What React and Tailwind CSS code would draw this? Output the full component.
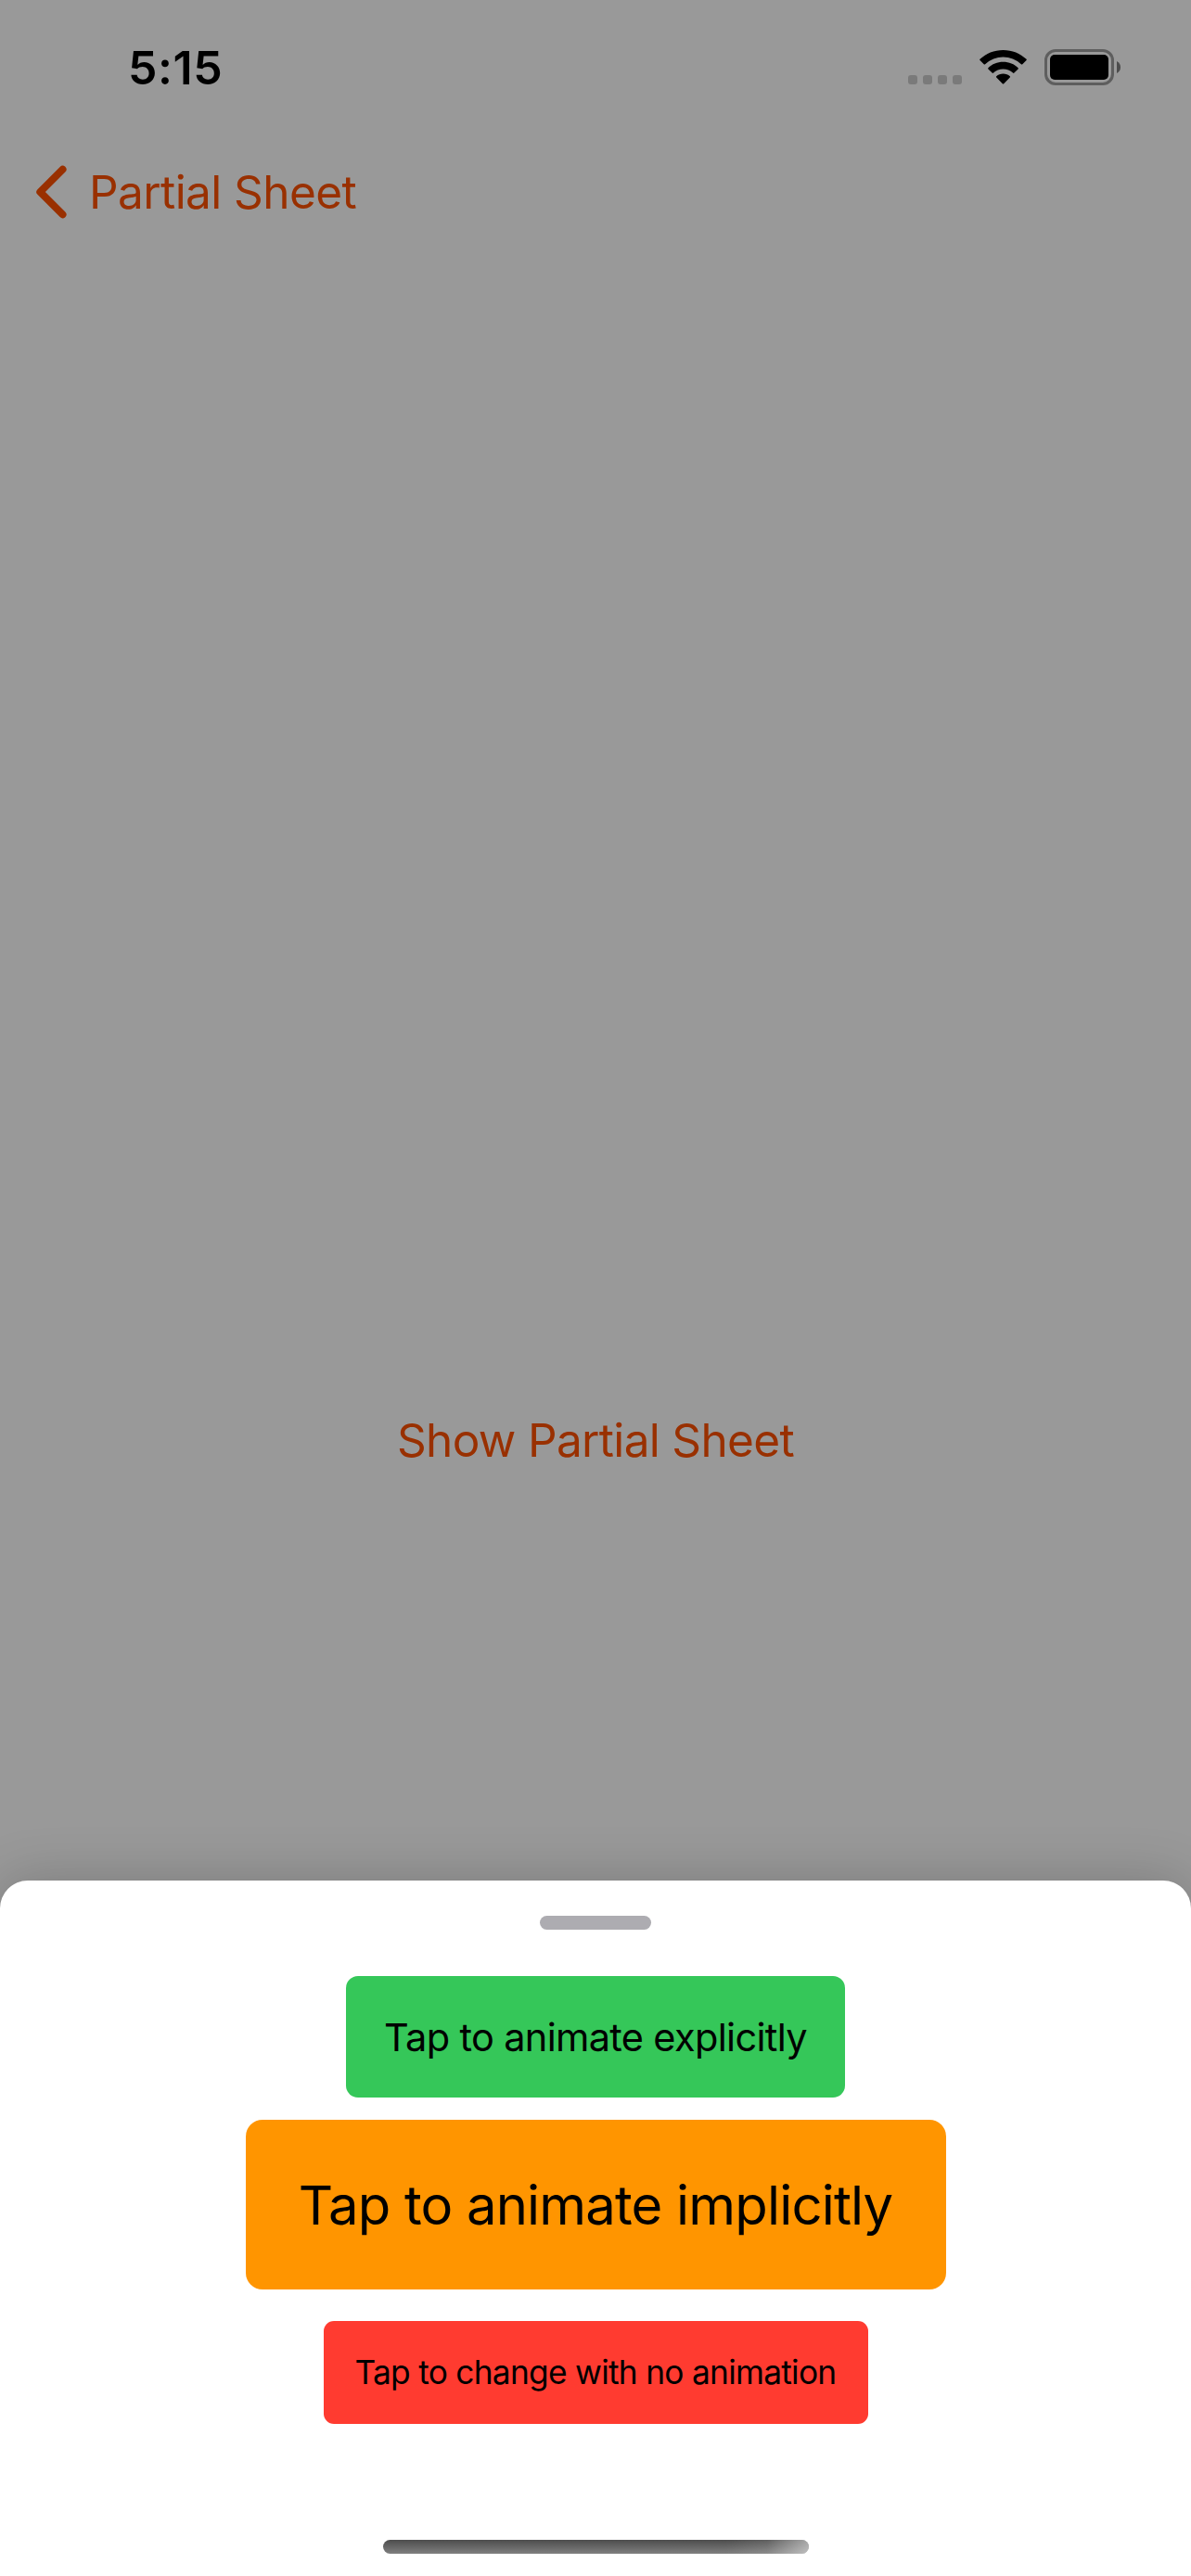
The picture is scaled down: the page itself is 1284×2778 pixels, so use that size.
function StatusBar() {
  return (
    <header className="flex h-[141px] items-start justify-between pl-[138px] pr-[76px] pt-[43px]">
      <span className="whitespace-nowrap text-[50px] font-semibold leading-[60px] tracking-[0.6px] text-black">5:15</span>
      <div className="flex pt-[10px]">
        <div className="mr-[19px] flex gap-[6px] pt-[28px]">
          <i className="size-[10px] rounded-[3px] bg-[#7a7a7a]" />
          <i className="size-[10px] rounded-[3px] bg-[#7a7a7a]" />
          <i className="size-[10px] rounded-[3px] bg-[#7a7a7a]" />
          <i className="size-[10px] rounded-[3px] bg-[#7a7a7a]" />
        </div>
        <svg className="mr-[19px] mt-px h-[37px] w-[51px]" viewBox="0 0 51 37">
          <path d="M25.5 0C35.2 0 44 3.700 50.500 9.800Q51.100 10.500 50.500 11.100L46.300 15.300Q45.600 15.900 44.900 15.300A28.200 28.200 0 0 0 6.100 15.300Q5.400 15.900 4.700 15.300L.5 11.100Q-.1 10.500 .5 9.800C7 3.700 15.800 0 25.500 0Z" />
          <path d="M25.500 12.800C31.800 12.800 37.500 15.200 41.600 19.200Q42.200 19.800 41.600 20.400L37.400 24.600Q36.700 25.200 36 24.600A15.600 15.600 0 0 0 15 24.600Q14.300 25.200 13.600 24.600L9.400 20.400Q8.800 19.800 9.400 19.200C13.500 15.200 19.200 12.800 25.500 12.800Z" />
          <path d="M25.500 25.500C28.300 25.500 30.900 26.500 32.800 28.300Q33.400 28.900 32.800 29.500L26.200 36.200Q25.500 37 24.800 36.200L18.200 29.500Q17.600 28.900 18.200 28.300C20.100 26.500 22.700 25.500 25.500 25.500Z" />
        </svg>
        <div className="h-[39px] w-[75px] rounded-[12px] border-[3px] border-[#5e5e5e] p-[3px]">
          <div className="h-full rounded-[5px] bg-black" />
        </div>
        <svg className="ml-[3px] mt-[13px] h-[13px] w-[4px]" viewBox="0 0 4 13">
          <path d="M0 0Q4 2.200 4 6.500T0 13Z" fill="#4c4c4c" />
        </svg>
      </div>
    </header>
  );
}

function BottomSheet() {
  return (
    <section className="flex h-[750px] flex-col items-center rounded-t-[30px] bg-white pt-[38px] shadow-[0_0_60px_rgba(0,0,0,0.2)]">
      <div className="h-[15px] w-[120px] rounded-full bg-[#adacb1]" />
      <button className="mt-[50px] flex h-[131px] w-[538px] items-center justify-center rounded-[13px] bg-[#35c759]">
        <span className="whitespace-nowrap text-[41.5px] leading-[50px] tracking-[-0.67px]">Tap to animate explicitly</span>
      </button>
      <button className="mt-[24px] flex h-[183px] w-[755px] items-center justify-center rounded-[18px] bg-[#ff9500]">
        <span className="whitespace-nowrap text-[58px] leading-[70px] tracking-[-0.83px]">Tap to animate implicitly</span>
      </button>
      <button className="mt-[34px] flex h-[111px] w-[587px] items-center justify-center rounded-[11px] bg-[#ff3b30]">
        <span className="whitespace-nowrap text-[35.3px] leading-[42px] tracking-[-0.73px]">Tap to change with no animation</span>
      </button>
      <div className="mt-[125px] h-[15px] w-[459px] overflow-hidden rounded-full bg-linear-to-b from-[#4d4d4d] to-[#808080]">
        <div className="ml-auto h-full w-[90px] bg-linear-to-r from-white/0 via-white/10 to-white/50" />
      </div>
    </section>
  );
}

export default function App() {
  return (
    <main className="flex h-[2778px] w-[1284px] flex-col overflow-hidden bg-[#999999] font-[Inter,sans-serif]">
      <StatusBar />
      <nav className="flex h-[132px] items-center text-[#993000]">
        <svg className="ml-[38px] h-[60px] w-[36px]" viewBox="0 0 36 60" fill="none" stroke="currentColor" strokeWidth="8" strokeLinecap="round" strokeLinejoin="round">
          <path d="M29.500 5.700L5.300 30L29.500 54.300" />
        </svg>
        <span className="ml-[22px] whitespace-nowrap text-[49.5px] leading-[60px] tracking-[-0.58px]">Partial Sheet</span>
      </nav>
      <div className="flex flex-1 items-center justify-center pt-[805px] text-[#993000]">
        <span className="whitespace-nowrap text-[49.5px] leading-[60px] tracking-[-0.66px]">Show Partial Sheet</span>
      </div>
      <BottomSheet />
    </main>
  );
}
